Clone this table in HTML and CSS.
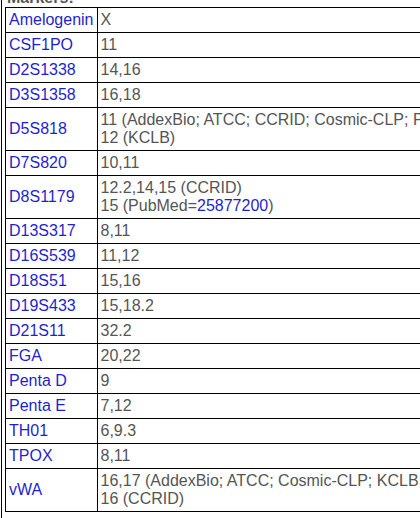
FILE: index.html
```html
<!DOCTYPE html>
<html>
<head>
<meta charset="utf-8">
<link rel="stylesheet" href="styles.css">
</head>
<body>
<div class="panel">
  <div class="heading">Markers:</div>
  <table class="markers">
    <tr><td class="name"><a href="#">Amelogenin</a></td><td class="val">X</td></tr>
    <tr><td class="name"><a href="#">CSF1PO</a></td><td class="val">11</td></tr>
    <tr><td class="name"><a href="#">D2S1338</a></td><td class="val">14,16</td></tr>
    <tr><td class="name"><a href="#">D3S1358</a></td><td class="val">16,18</td></tr>
    <tr><td class="name"><a href="#">D5S818</a></td><td class="val">11 (AddexBio; ATCC; CCRID; Cosmic-CLP; PubMed=<a href="#">25877200</a>)<br>12 (KCLB)</td></tr>
    <tr><td class="name"><a href="#">D7S820</a></td><td class="val">10,11</td></tr>
    <tr><td class="name"><a href="#">D8S1179</a></td><td class="val">12.2,14,15 (CCRID)<br>15 (PubMed=<a href="#">25877200</a>)</td></tr>
    <tr><td class="name"><a href="#">D13S317</a></td><td class="val">8,11</td></tr>
    <tr><td class="name"><a href="#">D16S539</a></td><td class="val">11,12</td></tr>
    <tr><td class="name"><a href="#">D18S51</a></td><td class="val">15,16</td></tr>
    <tr><td class="name"><a href="#">D19S433</a></td><td class="val">15,18.2</td></tr>
    <tr><td class="name"><a href="#">D21S11</a></td><td class="val">32.2</td></tr>
    <tr><td class="name"><a href="#">FGA</a></td><td class="val">20,22</td></tr>
    <tr><td class="name"><a href="#">Penta D</a></td><td class="val">9</td></tr>
    <tr><td class="name"><a href="#">Penta E</a></td><td class="val">7,12</td></tr>
    <tr><td class="name"><a href="#">TH01</a></td><td class="val">6,9.3</td></tr>
    <tr><td class="name"><a href="#">TPOX</a></td><td class="val">8,11</td></tr>
    <tr><td class="name"><a href="#">vWA</a></td><td class="val">16,17 (AddexBio; ATCC; Cosmic-CLP; KCLB; PubMed=<a href="#">25877200</a>)<br>16 (CCRID)</td></tr>
  </table>
</div>
</body>
</html>
```
FILE: styles.css
```css
html, body {
  overflow: hidden;
}
body {
  margin: 0;
  font-family: "Liberation Sans", Arial, sans-serif;
  font-size: 16px;
  line-height: 18px;
  color: #555555;
  background: #ffffff;
}
.panel {
  margin-left: 1px;
  border-left: 1px solid #000000;
  padding-left: 3px;
  padding-bottom: 40px;
}
.heading {
  margin-top: -11px;
  padding-left: 2px;
  font-weight: bold;
  color: #555555;
}
.markers {
  border-collapse: collapse;
}
.markers td {
  border: 1px solid #000000;
  padding: 3px;
  vertical-align: middle;
  white-space: nowrap;
}
.markers a {
  color: #1f1fd0;
  text-decoration: none;
}
```
